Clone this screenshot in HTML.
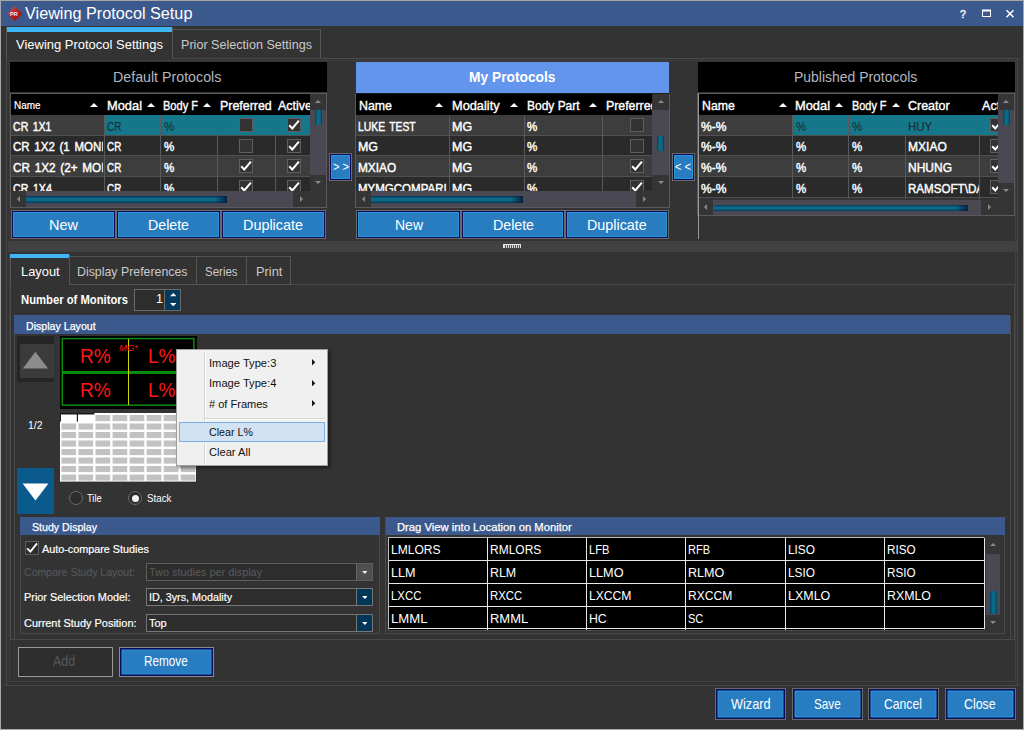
<!DOCTYPE html>
<html><head><meta charset="utf-8"><title>Viewing Protocol Setup</title>
<style>
html,body{margin:0;padding:0;}
body{width:1024px;height:730px;overflow:hidden;position:relative;background:#333;font-family:"Liberation Sans",sans-serif;}
body div,body svg{position:absolute;}
</style></head><body>
<div style="left:0px;top:0px;width:1024px;height:730px;background:#a8a8a8;"></div>
<div style="left:1px;top:1px;width:1022px;height:728px;background:#333333;"></div>
<div style="left:1px;top:1px;width:1022px;height:25px;background:#3c598d;"></div>
<svg style="left:7.2px;top:5.6px" width="15.6" height="15.6" viewBox="0 0 16 16"><defs><linearGradient id="ig" x1="0" y1="0" x2="1" y2="1"><stop offset="0" stop-color="#dc6a62"/><stop offset="0.45" stop-color="#bb1e1c"/><stop offset="1" stop-color="#8c0e0e"/></linearGradient></defs><path d="M8 0.3 L15.7 8 L8 15.7 L0.3 8 Z" fill="url(#ig)"/><text x="7.2" y="9.8" font-family="Liberation Sans, sans-serif" font-size="5.8" font-weight="bold" fill="#f4e6e6" text-anchor="middle">PR</text></svg>
<div style="left:25px;top:5.17px;font-size:17.4px;line-height:1;color:#fff;white-space:pre;transform-origin:0 0;transform:scaleX(0.9327);">Viewing Protocol Setup</div>
<svg style="left:955px;top:4px" width="64" height="20" viewBox="0 0 64 20" fill="none" stroke="#fff"><text x="8" y="13.6" font-family="Liberation Sans, sans-serif" font-size="10.6" fill="#eee" stroke="#eee" stroke-width="0.5" text-anchor="middle">?</text><rect x="27.5" y="6.5" width="8" height="6" stroke-width="1"/><rect x="27" y="5.5" width="9" height="2" fill="#fff" stroke="none"/><path d="M51.5 6.2 L58.5 13.3 M58.5 6.2 L51.5 13.3" stroke-width="1.5"/></svg>
<div style="left:6px;top:58px;width:1012px;height:628px;border:1px solid #4a4a4a;box-sizing:border-box;"></div>
<div style="left:9px;top:60px;width:1007px;height:622px;border:1px solid #3f3f3f;box-sizing:border-box;"></div>
<div style="left:6px;top:27px;width:167px;height:32px;background:#333333;border-left:1px solid #555;border-right:1px solid #555;box-sizing:border-box;"></div>
<div style="left:7px;top:27px;width:165px;height:4.5px;background:#3db5f7;"></div>
<div style="left:172px;top:29px;width:149px;height:29px;background:#333333;border:1px solid #555;box-sizing:border-box;border-bottom:none;"></div>
<div style="left:16px;top:37.99px;font-size:13.6px;line-height:1;color:#fff;white-space:pre;transform-origin:0 0;transform:scaleX(0.9547);">Viewing Protocol Settings</div>
<div style="left:181px;top:37.99px;font-size:13.6px;line-height:1;color:#c9c9c9;white-space:pre;transform-origin:0 0;transform:scaleX(0.9267);">Prior Selection Settings</div>
<div style="left:10px;top:62px;width:317px;height:30px;background:#000;"></div>
<div style="left:113.4px;top:69.81px;font-size:14.4px;line-height:1;color:#b2b7c0;white-space:pre;transform-origin:0 0;transform:scaleX(0.9886);">Default Protocols</div>
<div style="left:10px;top:93px;width:317px;height:115px;background:#2b2b2b;box-sizing:border-box;border:1px solid #5a5a5a;"></div>
<div style="left:11px;top:94px;width:299px;height:21px;background:#000;"></div>
<div style="left:11px;top:115px;width:299px;height:21px;background:#3d3d3d;"></div>
<div style="left:105px;top:115px;width:205px;height:21px;background:#16778b;"></div>
<div style="left:11px;top:135px;width:299px;height:1px;background:#505050;"></div>
<div style="left:11px;top:136px;width:299px;height:20px;background:#2a2a2a;"></div>
<div style="left:11px;top:155px;width:299px;height:1px;background:#505050;"></div>
<div style="left:11px;top:156px;width:299px;height:21px;background:#3d3d3d;"></div>
<div style="left:11px;top:176px;width:299px;height:1px;background:#505050;"></div>
<div style="left:11px;top:177px;width:299px;height:14px;background:#2a2a2a;"></div>
<div style="left:104px;top:115px;width:1px;height:76px;background:#595959;"></div>
<div style="left:160px;top:115px;width:1px;height:76px;background:#595959;"></div>
<div style="left:217px;top:115px;width:1px;height:76px;background:#595959;"></div>
<div style="left:275px;top:115px;width:1px;height:76px;background:#595959;"></div>
<div style="left:13.5px;top:100.05px;font-size:11.4px;line-height:1;color:#fff;white-space:pre;transform-origin:0 0;transform:scaleX(0.8714);-webkit-text-stroke:0.2px #fff;">Name</div>
<svg style="left:90.0px;top:103.0px" width="8" height="4" viewBox="0 0 8 4"><path d="M0 4 L4.0 0 L8 4 Z" fill="#fff"/></svg>
<div style="left:105px;top:95.70px;width:39px;height:21px;overflow:hidden;"><div style="left:107px;top:98.70px;font-size:13px;line-height:1;color:#fff;white-space:pre;transform-origin:0 0;transform:scaleX(0.9885);-webkit-text-stroke:0.38px #fff;left:2px;top:3px;">Modal</div></div>
<svg style="left:147.0px;top:103.0px" width="8" height="4" viewBox="0 0 8 4"><path d="M0 4 L4.0 0 L8 4 Z" fill="#fff"/></svg>
<div style="left:161px;top:95.70px;width:38.5px;height:21px;overflow:hidden;"><div style="left:163px;top:98.70px;font-size:13px;line-height:1;color:#fff;white-space:pre;transform-origin:0 0;transform:scaleX(0.8498);-webkit-text-stroke:0.38px #fff;left:2px;top:3px;">Body F</div></div>
<svg style="left:203.0px;top:103.0px" width="8" height="4" viewBox="0 0 8 4"><path d="M0 4 L4.0 0 L8 4 Z" fill="#fff"/></svg>
<div style="left:220.3px;top:98.70px;font-size:13px;line-height:1;color:#fff;white-space:pre;transform-origin:0 0;transform:scaleX(0.9540);-webkit-text-stroke:0.38px #fff;">Preferred</div>
<div style="left:276px;top:95.70px;width:34px;height:21px;overflow:hidden;"><div style="left:277.6px;top:98.70px;font-size:13px;line-height:1;color:#fff;white-space:pre;transform-origin:0 0;transform:scaleX(0.9576);-webkit-text-stroke:0.38px #fff;left:1.6000000000000227px;top:3px;">Active</div></div>
<div style="left:11px;top:117.59px;width:91.5px;height:20.3px;overflow:hidden;"><div style="left:13px;top:120.59px;font-size:12.3px;line-height:1;color:#fff;white-space:pre;transform-origin:0 0;transform:scaleX(0.8619);-webkit-text-stroke:0.42px #fff;word-spacing:1.6px;left:2px;top:3px;">CR 1X1</div></div>
<div style="left:107px;top:120.59px;font-size:12.3px;line-height:1;color:#14272f;white-space:pre;transform-origin:0 0;transform:scaleX(0.8049);word-spacing:1.6px;">CR</div>
<div style="left:164px;top:120.59px;font-size:12.3px;line-height:1;color:#14272f;white-space:pre;transform-origin:0 0;transform:scaleX(0.9418);word-spacing:1.6px;">%</div>
<div style="left:11px;top:138.29px;width:91.5px;height:20.3px;overflow:hidden;"><div style="left:13px;top:141.29px;font-size:12.3px;line-height:1;color:#fff;white-space:pre;transform-origin:0 0;transform:scaleX(0.9360);-webkit-text-stroke:0.42px #fff;word-spacing:1.6px;left:2px;top:3px;">CR 1X2 (1 MONI</div></div>
<div style="left:107px;top:141.29px;font-size:12.3px;line-height:1;color:#fff;white-space:pre;transform-origin:0 0;transform:scaleX(0.8049);-webkit-text-stroke:0.42px #fff;word-spacing:1.6px;">CR</div>
<div style="left:164px;top:141.29px;font-size:12.3px;line-height:1;color:#fff;white-space:pre;transform-origin:0 0;transform:scaleX(0.9418);-webkit-text-stroke:0.42px #fff;word-spacing:1.6px;">%</div>
<div style="left:11px;top:158.99px;width:91.5px;height:20.3px;overflow:hidden;"><div style="left:13px;top:161.99px;font-size:12.3px;line-height:1;color:#fff;white-space:pre;transform-origin:0 0;transform:scaleX(0.9526);-webkit-text-stroke:0.42px #fff;word-spacing:1.6px;left:2px;top:3px;">CR 1X2 (2+ MOI</div></div>
<div style="left:107px;top:161.99px;font-size:12.3px;line-height:1;color:#fff;white-space:pre;transform-origin:0 0;transform:scaleX(0.8049);-webkit-text-stroke:0.42px #fff;word-spacing:1.6px;">CR</div>
<div style="left:164px;top:161.99px;font-size:12.3px;line-height:1;color:#fff;white-space:pre;transform-origin:0 0;transform:scaleX(0.9418);-webkit-text-stroke:0.42px #fff;word-spacing:1.6px;">%</div>
<div style="left:11px;top:179.69px;width:91.5px;height:20.3px;overflow:hidden;"><div style="left:13px;top:182.69px;font-size:12.3px;line-height:1;color:#fff;white-space:pre;transform-origin:0 0;transform:scaleX(0.8731);-webkit-text-stroke:0.42px #fff;word-spacing:1.6px;left:2px;top:3px;">CR 1X4</div></div>
<div style="left:107px;top:182.69px;font-size:12.3px;line-height:1;color:#fff;white-space:pre;transform-origin:0 0;transform:scaleX(0.8049);-webkit-text-stroke:0.42px #fff;word-spacing:1.6px;">CR</div>
<div style="left:164px;top:182.69px;font-size:12.3px;line-height:1;color:#fff;white-space:pre;transform-origin:0 0;transform:scaleX(0.9418);-webkit-text-stroke:0.42px #fff;word-spacing:1.6px;">%</div>
<div style="left:239px;top:118px;width:14px;height:14px;overflow:hidden;"><div style="left:0;top:0;width:14px;height:14px;box-sizing:border-box;border:1px solid #5e5e5e;background:#333;"></div></div>
<div style="left:287px;top:118px;width:14px;height:14px;overflow:hidden;"><div style="left:0;top:0;width:14px;height:14px;box-sizing:border-box;border:1px solid #5e5e5e;background:#333;"><svg style="left:-1px;top:-1px" width="14" height="14" viewBox="0 0 14 14"><path d="M2.2 7.3 L5.3 10.5 L11.9 2.7" fill="none" stroke="#fff" stroke-width="2"/></svg></div></div>
<div style="left:239px;top:139px;width:14px;height:14px;overflow:hidden;"><div style="left:0;top:0;width:14px;height:14px;box-sizing:border-box;border:1px solid #5e5e5e;background:#333;"></div></div>
<div style="left:287px;top:139px;width:14px;height:14px;overflow:hidden;"><div style="left:0;top:0;width:14px;height:14px;box-sizing:border-box;border:1px solid #5e5e5e;background:#333;"><svg style="left:-1px;top:-1px" width="14" height="14" viewBox="0 0 14 14"><path d="M2.2 7.3 L5.3 10.5 L11.9 2.7" fill="none" stroke="#fff" stroke-width="2"/></svg></div></div>
<div style="left:239px;top:159px;width:14px;height:14px;overflow:hidden;"><div style="left:0;top:0;width:14px;height:14px;box-sizing:border-box;border:1px solid #5e5e5e;background:#333;"><svg style="left:-1px;top:-1px" width="14" height="14" viewBox="0 0 14 14"><path d="M2.2 7.3 L5.3 10.5 L11.9 2.7" fill="none" stroke="#fff" stroke-width="2"/></svg></div></div>
<div style="left:287px;top:159px;width:14px;height:14px;overflow:hidden;"><div style="left:0;top:0;width:14px;height:14px;box-sizing:border-box;border:1px solid #5e5e5e;background:#333;"><svg style="left:-1px;top:-1px" width="14" height="14" viewBox="0 0 14 14"><path d="M2.2 7.3 L5.3 10.5 L11.9 2.7" fill="none" stroke="#fff" stroke-width="2"/></svg></div></div>
<div style="left:239px;top:180px;width:14px;height:11px;overflow:hidden;"><div style="left:0;top:0;width:14px;height:14px;box-sizing:border-box;border:1px solid #5e5e5e;background:#333;"><svg style="left:-1px;top:-1px" width="14" height="14" viewBox="0 0 14 14"><path d="M2.2 7.3 L5.3 10.5 L11.9 2.7" fill="none" stroke="#fff" stroke-width="2"/></svg></div></div>
<div style="left:287px;top:180px;width:14px;height:11px;overflow:hidden;"><div style="left:0;top:0;width:14px;height:14px;box-sizing:border-box;border:1px solid #5e5e5e;background:#333;"><svg style="left:-1px;top:-1px" width="14" height="14" viewBox="0 0 14 14"><path d="M2.2 7.3 L5.3 10.5 L11.9 2.7" fill="none" stroke="#fff" stroke-width="2"/></svg></div></div>
<div style="left:310px;top:94px;width:16px;height:97px;background:#4a4852;"></div>
<div style="left:310px;top:94px;width:16px;height:16px;background:#353535;"></div>
<div style="left:310px;top:175px;width:16px;height:16px;background:#353535;"></div>
<svg style="left:315.0px;top:100.0px" width="6" height="3" viewBox="0 0 6 3"><path d="M0 3 L3 0 L6 3 Z" fill="#8a8a8a"/></svg>
<svg style="left:315.0px;top:180.5px" width="6" height="3" viewBox="0 0 6 3"><path d="M0 0 L3 3 L6 0 Z" fill="#8a8a8a"/></svg>
<div style="left:315px;top:110px;width:7px;height:15px;background:linear-gradient(90deg,#0a3a5c,#0a6a84 30%,#0a6a84 70%,#0a3a5c);"></div>
<div style="left:11px;top:191px;width:315px;height:16px;background:#4a4852;"></div>
<div style="left:11px;top:191px;width:15px;height:16px;background:#353535;"></div>
<div style="left:293px;top:191px;width:33px;height:16px;background:#353535;"></div>
<svg style="left:16.5px;top:196.0px" width="3" height="6" viewBox="0 0 3 6"><path d="M3 0 L0 3 L3 6 Z" fill="#8a8a8a"/></svg>
<svg style="left:299.5px;top:196.0px" width="3" height="6" viewBox="0 0 3 6"><path d="M0 0 L3 3 L0 6 Z" fill="#8a8a8a"/></svg>
<div style="left:26px;top:196px;width:201px;height:6.5px;background:linear-gradient(#0a3358,#0a6a86 35%,#0a6a86 65%,#0a3358);"></div>
<div style="left:215px;top:196px;width:12px;height:6.5px;background:linear-gradient(90deg,rgba(10,40,80,0),rgba(8,30,62,0.95));"></div>
<div style="left:11px;top:210px;width:105px;height:29px;background:#277dc0;box-sizing:border-box;border:1px solid #6a6a6a;box-shadow:inset 0 0 0 1px #0b0b5e,inset 0 0 0 2px #2b93d8;"></div>
<div style="left:49px;top:216.90px;font-size:15px;line-height:1;color:#fff;white-space:pre;transform-origin:0 0;transform:scaleX(0.9664);">New</div>
<div style="left:116px;top:210px;width:105px;height:29px;background:#277dc0;box-sizing:border-box;border:1px solid #6a6a6a;box-shadow:inset 0 0 0 1px #0b0b5e,inset 0 0 0 2px #2b93d8;"></div>
<div style="left:148px;top:216.90px;font-size:15px;line-height:1;color:#fff;white-space:pre;transform-origin:0 0;transform:scaleX(0.9456);">Delete</div>
<div style="left:221px;top:210px;width:104.5px;height:29px;background:#277dc0;box-sizing:border-box;border:1px solid #6a6a6a;box-shadow:inset 0 0 0 1px #0b0b5e,inset 0 0 0 2px #2b93d8;"></div>
<div style="left:243px;top:216.90px;font-size:15px;line-height:1;color:#fff;white-space:pre;transform-origin:0 0;transform:scaleX(0.9595);">Duplicate</div>
<div style="left:329px;top:153.4px;width:23px;height:27.6px;background:#277dc0;box-sizing:border-box;border:1px solid #6a6a6a;box-shadow:inset 0 0 0 1px #0b0b5e,inset 0 0 0 2px #2b93d8;"></div>
<div style="left:332.5px;top:161.42px;font-size:12.5px;line-height:1;color:#fff;white-space:pre;transform-origin:0 0;transform:scaleX(0.8853);">&gt; &gt;</div>
<div style="left:356px;top:62px;width:313px;height:31px;background:#6495ed;"></div>
<div style="left:468.5px;top:69.98px;font-size:14.2px;line-height:1;color:#fff;white-space:pre;transform-origin:0 0;transform:scaleX(0.9702);font-weight:bold;">My Protocols</div>
<div style="left:355px;top:93px;width:315px;height:115px;background:#2b2b2b;box-sizing:border-box;border:1px solid #5a5a5a;border-top-color:#1c1c1c;"></div>
<div style="left:356px;top:94px;width:296px;height:21px;background:#000;"></div>
<div style="left:356px;top:115px;width:296px;height:21px;background:#3d3d3d;"></div>
<div style="left:356px;top:135px;width:296px;height:1px;background:#505050;"></div>
<div style="left:356px;top:136px;width:296px;height:20px;background:#2a2a2a;"></div>
<div style="left:356px;top:155px;width:296px;height:1px;background:#505050;"></div>
<div style="left:356px;top:156px;width:296px;height:21px;background:#3d3d3d;"></div>
<div style="left:356px;top:176px;width:296px;height:1px;background:#505050;"></div>
<div style="left:356px;top:177px;width:296px;height:14px;background:#2a2a2a;"></div>
<div style="left:449px;top:115px;width:1px;height:76px;background:#595959;"></div>
<div style="left:524px;top:115px;width:1px;height:76px;background:#595959;"></div>
<div style="left:602px;top:115px;width:1px;height:76px;background:#595959;"></div>
<div style="left:359px;top:98.70px;font-size:13px;line-height:1;color:#fff;white-space:pre;transform-origin:0 0;transform:scaleX(0.9516);-webkit-text-stroke:0.38px #fff;">Name</div>
<svg style="left:435.0px;top:103.0px" width="8" height="4" viewBox="0 0 8 4"><path d="M0 4 L4.0 0 L8 4 Z" fill="#fff"/></svg>
<div style="left:451.7px;top:98.70px;font-size:13px;line-height:1;color:#fff;white-space:pre;transform-origin:0 0;transform:scaleX(0.9833);-webkit-text-stroke:0.38px #fff;">Modality</div>
<svg style="left:510.0px;top:103.0px" width="8" height="4" viewBox="0 0 8 4"><path d="M0 4 L4.0 0 L8 4 Z" fill="#fff"/></svg>
<div style="left:527px;top:98.70px;font-size:13px;line-height:1;color:#fff;white-space:pre;transform-origin:0 0;transform:scaleX(0.9214);-webkit-text-stroke:0.38px #fff;">Body Part</div>
<svg style="left:588.5px;top:103.0px" width="8" height="4" viewBox="0 0 8 4"><path d="M0 4 L4.0 0 L8 4 Z" fill="#fff"/></svg>
<div style="left:604px;top:95.70px;width:48px;height:21px;overflow:hidden;"><div style="left:605.6px;top:98.70px;font-size:13px;line-height:1;color:#fff;white-space:pre;transform-origin:0 0;transform:scaleX(0.9485);-webkit-text-stroke:0.38px #fff;left:1.6000000000000227px;top:3px;">Preferred</div></div>
<div style="left:356px;top:117.59px;width:92.5px;height:20.3px;overflow:hidden;"><div style="left:358.3px;top:120.59px;font-size:12.3px;line-height:1;color:#fff;white-space:pre;transform-origin:0 0;transform:scaleX(0.8440);-webkit-text-stroke:0.42px #fff;word-spacing:1.6px;left:2.3000000000000114px;top:3px;">LUKE TEST</div></div>
<div style="left:451.7px;top:120.59px;font-size:12.3px;line-height:1;color:#fff;white-space:pre;transform-origin:0 0;transform:scaleX(1.0145);-webkit-text-stroke:0.42px #fff;word-spacing:1.6px;">MG</div>
<div style="left:527px;top:120.59px;font-size:12.3px;line-height:1;color:#fff;white-space:pre;transform-origin:0 0;transform:scaleX(0.9418);-webkit-text-stroke:0.42px #fff;word-spacing:1.6px;">%</div>
<div style="left:356px;top:138.29px;width:92.5px;height:20.3px;overflow:hidden;"><div style="left:358.3px;top:141.29px;font-size:12.3px;line-height:1;color:#fff;white-space:pre;transform-origin:0 0;transform:scaleX(1.0094);-webkit-text-stroke:0.42px #fff;word-spacing:1.6px;left:2.3000000000000114px;top:3px;">MG</div></div>
<div style="left:451.7px;top:141.29px;font-size:12.3px;line-height:1;color:#fff;white-space:pre;transform-origin:0 0;transform:scaleX(1.0145);-webkit-text-stroke:0.42px #fff;word-spacing:1.6px;">MG</div>
<div style="left:527px;top:141.29px;font-size:12.3px;line-height:1;color:#fff;white-space:pre;transform-origin:0 0;transform:scaleX(0.9418);-webkit-text-stroke:0.42px #fff;word-spacing:1.6px;">%</div>
<div style="left:356px;top:158.99px;width:92.5px;height:20.3px;overflow:hidden;"><div style="left:358.3px;top:161.99px;font-size:12.3px;line-height:1;color:#fff;white-space:pre;transform-origin:0 0;transform:scaleX(0.9637);-webkit-text-stroke:0.42px #fff;word-spacing:1.6px;left:2.3000000000000114px;top:3px;">MXIAO</div></div>
<div style="left:451.7px;top:161.99px;font-size:12.3px;line-height:1;color:#fff;white-space:pre;transform-origin:0 0;transform:scaleX(1.0145);-webkit-text-stroke:0.42px #fff;word-spacing:1.6px;">MG</div>
<div style="left:527px;top:161.99px;font-size:12.3px;line-height:1;color:#fff;white-space:pre;transform-origin:0 0;transform:scaleX(0.9418);-webkit-text-stroke:0.42px #fff;word-spacing:1.6px;">%</div>
<div style="left:356px;top:179.69px;width:92.5px;height:20.3px;overflow:hidden;"><div style="left:358.3px;top:182.69px;font-size:12.3px;line-height:1;color:#fff;white-space:pre;transform-origin:0 0;transform:scaleX(0.9361);-webkit-text-stroke:0.42px #fff;word-spacing:1.6px;left:2.3000000000000114px;top:3px;">MYMGCOMPARI</div></div>
<div style="left:451.7px;top:182.69px;font-size:12.3px;line-height:1;color:#fff;white-space:pre;transform-origin:0 0;transform:scaleX(1.0145);-webkit-text-stroke:0.42px #fff;word-spacing:1.6px;">MG</div>
<div style="left:527px;top:182.69px;font-size:12.3px;line-height:1;color:#fff;white-space:pre;transform-origin:0 0;transform:scaleX(0.9418);-webkit-text-stroke:0.42px #fff;word-spacing:1.6px;">%</div>
<div style="left:630px;top:118px;width:14px;height:14px;overflow:hidden;"><div style="left:0;top:0;width:14px;height:14px;box-sizing:border-box;border:1px solid #5e5e5e;background:#333;"></div></div>
<div style="left:630px;top:139px;width:14px;height:14px;overflow:hidden;"><div style="left:0;top:0;width:14px;height:14px;box-sizing:border-box;border:1px solid #5e5e5e;background:#333;"></div></div>
<div style="left:630px;top:159px;width:14px;height:14px;overflow:hidden;"><div style="left:0;top:0;width:14px;height:14px;box-sizing:border-box;border:1px solid #5e5e5e;background:#333;"><svg style="left:-1px;top:-1px" width="14" height="14" viewBox="0 0 14 14"><path d="M2.2 7.3 L5.3 10.5 L11.9 2.7" fill="none" stroke="#fff" stroke-width="2"/></svg></div></div>
<div style="left:630px;top:180px;width:14px;height:11px;overflow:hidden;"><div style="left:0;top:0;width:14px;height:14px;box-sizing:border-box;border:1px solid #5e5e5e;background:#333;"><svg style="left:-1px;top:-1px" width="14" height="14" viewBox="0 0 14 14"><path d="M2.2 7.3 L5.3 10.5 L11.9 2.7" fill="none" stroke="#fff" stroke-width="2"/></svg></div></div>
<div style="left:652px;top:94px;width:17px;height:97px;background:#4a4852;"></div>
<div style="left:652px;top:94px;width:17px;height:16px;background:#353535;"></div>
<div style="left:652px;top:175px;width:17px;height:16px;background:#353535;"></div>
<svg style="left:657.5px;top:100.0px" width="6" height="3" viewBox="0 0 6 3"><path d="M0 3 L3 0 L6 3 Z" fill="#8a8a8a"/></svg>
<svg style="left:657.5px;top:180.5px" width="6" height="3" viewBox="0 0 6 3"><path d="M0 0 L3 3 L6 0 Z" fill="#8a8a8a"/></svg>
<div style="left:657px;top:136px;width:7px;height:15px;background:linear-gradient(90deg,#0a3a5c,#0a6a84 30%,#0a6a84 70%,#0a3a5c);"></div>
<div style="left:356px;top:191px;width:313px;height:16px;background:#4a4852;"></div>
<div style="left:356px;top:191px;width:15px;height:16px;background:#353535;"></div>
<div style="left:636px;top:191px;width:33px;height:16px;background:#353535;"></div>
<svg style="left:361.5px;top:196.0px" width="3" height="6" viewBox="0 0 3 6"><path d="M3 0 L0 3 L3 6 Z" fill="#8a8a8a"/></svg>
<svg style="left:642.5px;top:196.0px" width="3" height="6" viewBox="0 0 3 6"><path d="M0 0 L3 3 L0 6 Z" fill="#8a8a8a"/></svg>
<div style="left:371px;top:196px;width:152px;height:6.5px;background:linear-gradient(#0a3358,#0a6a86 35%,#0a6a86 65%,#0a3358);"></div>
<div style="left:511px;top:196px;width:12px;height:6.5px;background:linear-gradient(90deg,rgba(10,40,80,0),rgba(8,30,62,0.95));"></div>
<div style="left:356px;top:210px;width:105px;height:29px;background:#277dc0;box-sizing:border-box;border:1px solid #6a6a6a;box-shadow:inset 0 0 0 1px #0b0b5e,inset 0 0 0 2px #2b93d8;"></div>
<div style="left:395px;top:216.90px;font-size:15px;line-height:1;color:#fff;white-space:pre;transform-origin:0 0;transform:scaleX(0.9331);">New</div>
<div style="left:461px;top:210px;width:104px;height:29px;background:#277dc0;box-sizing:border-box;border:1px solid #6a6a6a;box-shadow:inset 0 0 0 1px #0b0b5e,inset 0 0 0 2px #2b93d8;"></div>
<div style="left:492.5px;top:216.90px;font-size:15px;line-height:1;color:#fff;white-space:pre;transform-origin:0 0;transform:scaleX(0.9456);">Delete</div>
<div style="left:565px;top:210px;width:103.5px;height:29px;background:#277dc0;box-sizing:border-box;border:1px solid #6a6a6a;box-shadow:inset 0 0 0 1px #0b0b5e,inset 0 0 0 2px #2b93d8;"></div>
<div style="left:586.6px;top:216.90px;font-size:15px;line-height:1;color:#fff;white-space:pre;transform-origin:0 0;transform:scaleX(0.9563);">Duplicate</div>
<div style="left:671.6px;top:153.4px;width:23px;height:27.6px;background:#277dc0;box-sizing:border-box;border:1px solid #6a6a6a;box-shadow:inset 0 0 0 1px #0b0b5e,inset 0 0 0 2px #2b93d8;"></div>
<div style="left:675.3px;top:161.42px;font-size:12.5px;line-height:1;color:#fff;white-space:pre;transform-origin:0 0;transform:scaleX(0.8853);">&lt; &lt;</div>
<div style="left:698px;top:62px;width:317px;height:30px;background:#000;"></div>
<div style="left:794.4px;top:69.81px;font-size:14.4px;line-height:1;color:#b2b7c0;white-space:pre;transform-origin:0 0;transform:scaleX(0.9696);">Published Protocols</div>
<div style="left:697px;top:93px;width:318px;height:123px;background:#333;box-sizing:border-box;border:1px solid #5a5a5a;"></div>
<div style="left:698px;top:94px;width:300px;height:21px;background:#000;"></div>
<div style="left:698px;top:115px;width:300px;height:21px;background:#3d3d3d;"></div>
<div style="left:792.5px;top:115px;width:205.5px;height:21px;background:#16778b;"></div>
<div style="left:698px;top:135px;width:300px;height:1px;background:#505050;"></div>
<div style="left:698px;top:136px;width:300px;height:20px;background:#2a2a2a;"></div>
<div style="left:698px;top:155px;width:300px;height:1px;background:#505050;"></div>
<div style="left:698px;top:156px;width:300px;height:21px;background:#3d3d3d;"></div>
<div style="left:698px;top:176px;width:300px;height:1px;background:#505050;"></div>
<div style="left:698px;top:177px;width:300px;height:21px;background:#2a2a2a;"></div>
<div style="left:698px;top:197px;width:300px;height:1px;background:#505050;"></div>
<div style="left:791.5px;top:115px;width:1px;height:84px;background:#595959;"></div>
<div style="left:848px;top:115px;width:1px;height:84px;background:#595959;"></div>
<div style="left:904.5px;top:115px;width:1px;height:84px;background:#595959;"></div>
<div style="left:979px;top:115px;width:1px;height:84px;background:#595959;"></div>
<div style="left:701.6px;top:98.70px;font-size:13px;line-height:1;color:#fff;white-space:pre;transform-origin:0 0;transform:scaleX(0.9459);-webkit-text-stroke:0.38px #fff;">Name</div>
<svg style="left:778.5px;top:103.0px" width="8" height="4" viewBox="0 0 8 4"><path d="M0 4 L4.0 0 L8 4 Z" fill="#fff"/></svg>
<div style="left:793.5px;top:95.70px;width:38.5px;height:21px;overflow:hidden;"><div style="left:795px;top:98.70px;font-size:13px;line-height:1;color:#fff;white-space:pre;transform-origin:0 0;transform:scaleX(0.9885);-webkit-text-stroke:0.38px #fff;left:1.5px;top:3px;">Modal</div></div>
<svg style="left:835.0px;top:103.0px" width="8" height="4" viewBox="0 0 8 4"><path d="M0 4 L4.0 0 L8 4 Z" fill="#fff"/></svg>
<div style="left:850px;top:95.70px;width:38px;height:21px;overflow:hidden;"><div style="left:852px;top:98.70px;font-size:13px;line-height:1;color:#fff;white-space:pre;transform-origin:0 0;transform:scaleX(0.8377);-webkit-text-stroke:0.38px #fff;left:2px;top:3px;">Body F</div></div>
<svg style="left:891.5px;top:103.0px" width="8" height="4" viewBox="0 0 8 4"><path d="M0 4 L4.0 0 L8 4 Z" fill="#fff"/></svg>
<div style="left:908px;top:98.70px;font-size:13px;line-height:1;color:#fff;white-space:pre;transform-origin:0 0;transform:scaleX(0.9597);-webkit-text-stroke:0.38px #fff;">Creator</div>
<div style="left:981px;top:95.70px;width:17px;height:21px;overflow:hidden;"><div style="left:982px;top:98.70px;font-size:13px;line-height:1;color:#fff;white-space:pre;transform-origin:0 0;transform:scaleX(0.9690);-webkit-text-stroke:0.38px #fff;left:1px;top:3px;">Acti</div></div>
<div style="left:701px;top:120.59px;font-size:12.3px;line-height:1;color:#fff;white-space:pre;transform-origin:0 0;transform:scaleX(0.9819);-webkit-text-stroke:0.42px #fff;word-spacing:1.6px;">%-%</div>
<div style="left:795.6px;top:120.59px;font-size:12.3px;line-height:1;color:#14272f;white-space:pre;transform-origin:0 0;transform:scaleX(0.9326);word-spacing:1.6px;">%</div>
<div style="left:852px;top:120.59px;font-size:12.3px;line-height:1;color:#14272f;white-space:pre;transform-origin:0 0;transform:scaleX(0.9326);word-spacing:1.6px;">%</div>
<div style="left:906.5px;top:117.59px;width:72.0px;height:20.3px;overflow:hidden;"><div style="left:908px;top:120.59px;font-size:12.3px;line-height:1;color:#14272f;white-space:pre;transform-origin:0 0;transform:scaleX(0.9242);word-spacing:1.6px;left:1.5px;top:3px;">HUY</div></div>
<div style="left:990px;top:118px;width:8px;height:14px;overflow:hidden;"><div style="left:0;top:0;width:14px;height:14px;box-sizing:border-box;border:1px solid #5e5e5e;background:#333;"><svg style="left:-1px;top:-1px" width="14" height="14" viewBox="0 0 14 14"><path d="M2.2 7.3 L5.3 10.5 L11.9 2.7" fill="none" stroke="#fff" stroke-width="2"/></svg></div></div>
<div style="left:701px;top:141.29px;font-size:12.3px;line-height:1;color:#fff;white-space:pre;transform-origin:0 0;transform:scaleX(0.9819);-webkit-text-stroke:0.42px #fff;word-spacing:1.6px;">%-%</div>
<div style="left:795.6px;top:141.29px;font-size:12.3px;line-height:1;color:#fff;white-space:pre;transform-origin:0 0;transform:scaleX(0.9326);-webkit-text-stroke:0.42px #fff;word-spacing:1.6px;">%</div>
<div style="left:852px;top:141.29px;font-size:12.3px;line-height:1;color:#fff;white-space:pre;transform-origin:0 0;transform:scaleX(0.9326);-webkit-text-stroke:0.42px #fff;word-spacing:1.6px;">%</div>
<div style="left:906.5px;top:138.29px;width:72.0px;height:20.3px;overflow:hidden;"><div style="left:908px;top:141.29px;font-size:12.3px;line-height:1;color:#fff;white-space:pre;transform-origin:0 0;transform:scaleX(0.9788);-webkit-text-stroke:0.42px #fff;word-spacing:1.6px;left:1.5px;top:3px;">MXIAO</div></div>
<div style="left:990px;top:139px;width:8px;height:14px;overflow:hidden;"><div style="left:0;top:0;width:14px;height:14px;box-sizing:border-box;border:1px solid #5e5e5e;background:#333;"><svg style="left:-1px;top:-1px" width="14" height="14" viewBox="0 0 14 14"><path d="M2.2 7.3 L5.3 10.5 L11.9 2.7" fill="none" stroke="#fff" stroke-width="2"/></svg></div></div>
<div style="left:701px;top:161.99px;font-size:12.3px;line-height:1;color:#fff;white-space:pre;transform-origin:0 0;transform:scaleX(0.9819);-webkit-text-stroke:0.42px #fff;word-spacing:1.6px;">%-%</div>
<div style="left:795.6px;top:161.99px;font-size:12.3px;line-height:1;color:#fff;white-space:pre;transform-origin:0 0;transform:scaleX(0.9326);-webkit-text-stroke:0.42px #fff;word-spacing:1.6px;">%</div>
<div style="left:852px;top:161.99px;font-size:12.3px;line-height:1;color:#fff;white-space:pre;transform-origin:0 0;transform:scaleX(0.9326);-webkit-text-stroke:0.42px #fff;word-spacing:1.6px;">%</div>
<div style="left:906.5px;top:158.99px;width:72.0px;height:20.3px;overflow:hidden;"><div style="left:908px;top:161.99px;font-size:12.3px;line-height:1;color:#fff;white-space:pre;transform-origin:0 0;transform:scaleX(0.9756);-webkit-text-stroke:0.42px #fff;word-spacing:1.6px;left:1.5px;top:3px;">NHUNG</div></div>
<div style="left:990px;top:159px;width:8px;height:14px;overflow:hidden;"><div style="left:0;top:0;width:14px;height:14px;box-sizing:border-box;border:1px solid #5e5e5e;background:#333;"><svg style="left:-1px;top:-1px" width="14" height="14" viewBox="0 0 14 14"><path d="M2.2 7.3 L5.3 10.5 L11.9 2.7" fill="none" stroke="#fff" stroke-width="2"/></svg></div></div>
<div style="left:701px;top:182.69px;font-size:12.3px;line-height:1;color:#fff;white-space:pre;transform-origin:0 0;transform:scaleX(0.9819);-webkit-text-stroke:0.42px #fff;word-spacing:1.6px;">%-%</div>
<div style="left:795.6px;top:182.69px;font-size:12.3px;line-height:1;color:#fff;white-space:pre;transform-origin:0 0;transform:scaleX(0.9326);-webkit-text-stroke:0.42px #fff;word-spacing:1.6px;">%</div>
<div style="left:852px;top:182.69px;font-size:12.3px;line-height:1;color:#fff;white-space:pre;transform-origin:0 0;transform:scaleX(0.9326);-webkit-text-stroke:0.42px #fff;word-spacing:1.6px;">%</div>
<div style="left:906.5px;top:179.69px;width:72.0px;height:20.3px;overflow:hidden;"><div style="left:908px;top:182.69px;font-size:12.3px;line-height:1;color:#fff;white-space:pre;transform-origin:0 0;transform:scaleX(0.9425);-webkit-text-stroke:0.42px #fff;word-spacing:1.6px;left:1.5px;top:3px;">RAMSOFT\DA</div></div>
<div style="left:990px;top:180px;width:8px;height:14px;overflow:hidden;"><div style="left:0;top:0;width:14px;height:14px;box-sizing:border-box;border:1px solid #5e5e5e;background:#333;"><svg style="left:-1px;top:-1px" width="14" height="14" viewBox="0 0 14 14"><path d="M2.2 7.3 L5.3 10.5 L11.9 2.7" fill="none" stroke="#fff" stroke-width="2"/></svg></div></div>
<div style="left:998px;top:94px;width:16px;height:105px;background:#4a4852;"></div>
<div style="left:998px;top:94px;width:16px;height:16px;background:#353535;"></div>
<div style="left:998px;top:183px;width:16px;height:16px;background:#353535;"></div>
<svg style="left:1003.0px;top:100.0px" width="6" height="3" viewBox="0 0 6 3"><path d="M0 3 L3 0 L6 3 Z" fill="#8a8a8a"/></svg>
<svg style="left:1003.0px;top:188.5px" width="6" height="3" viewBox="0 0 6 3"><path d="M0 0 L3 3 L6 0 Z" fill="#8a8a8a"/></svg>
<div style="left:1003px;top:110px;width:7px;height:15px;background:linear-gradient(90deg,#0a3a5c,#0a6a84 30%,#0a6a84 70%,#0a3a5c);"></div>
<div style="left:698px;top:199.6px;width:316px;height:15.6px;background:#4a4852;"></div>
<div style="left:698px;top:199.6px;width:15px;height:15.6px;background:#353535;"></div>
<div style="left:981px;top:199.6px;width:33px;height:15.6px;background:#353535;"></div>
<svg style="left:703.5px;top:204.4px" width="3" height="6" viewBox="0 0 3 6"><path d="M3 0 L0 3 L3 6 Z" fill="#8a8a8a"/></svg>
<svg style="left:987.5px;top:204.4px" width="3" height="6" viewBox="0 0 3 6"><path d="M0 0 L3 3 L0 6 Z" fill="#8a8a8a"/></svg>
<div style="left:714px;top:204.6px;width:254px;height:6.1px;background:linear-gradient(#0a3358,#0a6a86 35%,#0a6a86 65%,#0a3358);"></div>
<div style="left:956px;top:204.6px;width:12px;height:6.1px;background:linear-gradient(90deg,rgba(10,40,80,0),rgba(8,30,62,0.95));"></div>
<div style="left:698px;top:93px;width:1px;height:146px;background:#9a9a9a;"></div>
<div style="left:8px;top:241px;width:1009px;height:11px;background:#414141;"></div>
<div style="left:503px;top:244.4px;width:18px;height:4px;background:repeating-linear-gradient(90deg,#d8d8d8 0 1px,#555 1px 2px);border-top:1.5px solid #e6e6e6;border-left:1px solid #e6e6e6;box-sizing:border-box;"></div>
<div style="left:10px;top:284px;width:1005px;height:356px;border:1px solid #4a4a4a;box-sizing:border-box;"></div>
<div style="left:14px;top:316px;width:997px;height:324px;border:1px solid #4a4a4a;border-top:none;box-sizing:border-box;"></div>
<div style="left:10px;top:254px;width:60px;height:31px;background:#333333;border-left:1px solid #555;border-right:1px solid #555;box-sizing:border-box;"></div>
<div style="left:10px;top:254px;width:59px;height:4.3px;background:#3db5f7;"></div>
<div style="left:69px;top:256px;width:128px;height:29px;background:#333333;border:1px solid #555;box-sizing:border-box;"></div>
<div style="left:196px;top:256px;width:51px;height:29px;background:#333333;border:1px solid #555;box-sizing:border-box;"></div>
<div style="left:246px;top:256px;width:45px;height:29px;background:#333333;border:1px solid #555;box-sizing:border-box;"></div>
<div style="left:20.6px;top:264.69px;font-size:13.6px;line-height:1;color:#fff;white-space:pre;transform-origin:0 0;transform:scaleX(0.9478);">Layout</div>
<div style="left:77px;top:264.69px;font-size:13.6px;line-height:1;color:#c9c9c9;white-space:pre;transform-origin:0 0;transform:scaleX(0.9088);">Display Preferences</div>
<div style="left:205px;top:264.69px;font-size:13.6px;line-height:1;color:#c9c9c9;white-space:pre;transform-origin:0 0;transform:scaleX(0.8457);">Series</div>
<div style="left:255.6px;top:264.69px;font-size:13.6px;line-height:1;color:#c9c9c9;white-space:pre;transform-origin:0 0;transform:scaleX(0.9441);">Print</div>
<div style="left:21.2px;top:293.83px;font-size:12.6px;line-height:1;color:#fff;white-space:pre;transform-origin:0 0;transform:scaleX(0.8939);font-weight:bold;">Number of Monitors</div>
<div style="left:134px;top:289px;width:47px;height:22px;background:#2d2d2d;border:1px solid #6a6a6a;box-sizing:border-box;"></div>
<div style="left:165px;top:290px;width:15px;height:20px;background:#033a5e;"></div>
<div style="left:156.4px;top:293.23px;font-size:12.6px;line-height:1;color:#fff;white-space:pre;transform-origin:0 0;transform:scaleX(0.9989);">1</div>
<svg style="left:169.7px;top:293.25px" width="6.6" height="3.3" viewBox="0 0 6.6 3.3"><path d="M0 3.3 L3.3 0 L6.6 3.3 Z" fill="#fff"/></svg>
<svg style="left:169.7px;top:303.15000000000003px" width="6.6" height="3.3" viewBox="0 0 6.6 3.3"><path d="M0 0 L3.3 3.3 L6.6 0 Z" fill="#fff"/></svg>
<div style="left:164px;top:290px;width:1px;height:20px;background:#6a6a6a;"></div>
<div style="left:14px;top:315px;width:996px;height:19px;background:#3c598d;"></div>
<div style="left:25.6px;top:320.65px;font-size:11.4px;line-height:1;color:#fff;white-space:pre;transform-origin:0 0;transform:scaleX(0.9321);-webkit-text-stroke:0.25px #fff;">Display Layout</div>
<div style="left:17px;top:336px;width:37px;height:46px;background:#252525;"></div>
<div style="left:20px;top:344px;width:34px;height:34px;background:#3b3b3b;"></div>
<svg style="left:22px;top:351px" width="27" height="18" viewBox="0 0 27 18"><path d="M0.8 17.6 L13.4 0.8 L26 17.6 Z" fill="#8c8c8c"/></svg>
<div style="left:59.5px;top:336px;width:137.5px;height:72.5px;background:#000;"></div>
<svg style="left:60px;top:336px" width="137" height="72" viewBox="0 0 137 72"><rect x="2.3" y="2.6" width="131.6" height="66.6" fill="none" stroke="#0b8c0b" stroke-width="1.5"/></svg>
<div style="left:62px;top:371px;width:132px;height:3px;background:#0b8c0b;"></div>
<div style="left:128px;top:339px;width:1.2px;height:66px;background:#d4d400;"></div>
<div style="left:80.3px;top:346.12px;font-size:20.3px;line-height:1;color:#ff1616;white-space:pre;transform-origin:0 0;transform:scaleX(0.9447);">R%</div>
<div style="left:80.3px;top:379.92px;font-size:20.3px;line-height:1;color:#ff1616;white-space:pre;transform-origin:0 0;transform:scaleX(0.9447);">R%</div>
<div style="left:148px;top:346.12px;font-size:20.3px;line-height:1;color:#ff1616;white-space:pre;transform-origin:0 0;transform:scaleX(0.9373);">L%</div>
<div style="left:148px;top:379.92px;font-size:20.3px;line-height:1;color:#ff1616;white-space:pre;transform-origin:0 0;transform:scaleX(0.9373);">L%</div>
<div style="left:118.6px;top:343.78px;font-size:9px;line-height:1;color:#ff1616;white-space:pre;transform-origin:0 0;transform:scaleX(1.0556);font-style:italic;">MG*</div>
<div style="left:28px;top:419.95px;font-size:11.4px;line-height:1;color:#fff;white-space:pre;transform-origin:0 0;transform:scaleX(0.9150);">1/2</div>
<svg style="left:60px;top:413px" width="136.4" height="68.6" viewBox="0 0 136.4 68.6"><rect width="136.4" height="68.6" fill="#fff"/><rect x="35.50" y="2.00" width="14.7" height="6.1" fill="#c2c2c2"/><rect x="52.55" y="2.00" width="14.7" height="6.1" fill="#c2c2c2"/><rect x="69.60" y="2.00" width="14.7" height="6.1" fill="#c2c2c2"/><rect x="86.65" y="2.00" width="14.7" height="6.1" fill="#c2c2c2"/><rect x="103.70" y="2.00" width="14.7" height="6.1" fill="#c2c2c2"/><rect x="120.75" y="2.00" width="14.7" height="6.1" fill="#c2c2c2"/><rect x="1.40" y="10.50" width="14.7" height="6.1" fill="#c2c2c2"/><rect x="18.45" y="10.50" width="14.7" height="6.1" fill="#c2c2c2"/><rect x="35.50" y="10.50" width="14.7" height="6.1" fill="#c2c2c2"/><rect x="52.55" y="10.50" width="14.7" height="6.1" fill="#c2c2c2"/><rect x="69.60" y="10.50" width="14.7" height="6.1" fill="#c2c2c2"/><rect x="86.65" y="10.50" width="14.7" height="6.1" fill="#c2c2c2"/><rect x="103.70" y="10.50" width="14.7" height="6.1" fill="#c2c2c2"/><rect x="120.75" y="10.50" width="14.7" height="6.1" fill="#c2c2c2"/><rect x="1.40" y="19.00" width="14.7" height="6.1" fill="#c2c2c2"/><rect x="18.45" y="19.00" width="14.7" height="6.1" fill="#c2c2c2"/><rect x="35.50" y="19.00" width="14.7" height="6.1" fill="#c2c2c2"/><rect x="52.55" y="19.00" width="14.7" height="6.1" fill="#c2c2c2"/><rect x="69.60" y="19.00" width="14.7" height="6.1" fill="#c2c2c2"/><rect x="86.65" y="19.00" width="14.7" height="6.1" fill="#c2c2c2"/><rect x="103.70" y="19.00" width="14.7" height="6.1" fill="#c2c2c2"/><rect x="120.75" y="19.00" width="14.7" height="6.1" fill="#c2c2c2"/><rect x="1.40" y="27.50" width="14.7" height="6.1" fill="#c2c2c2"/><rect x="18.45" y="27.50" width="14.7" height="6.1" fill="#c2c2c2"/><rect x="35.50" y="27.50" width="14.7" height="6.1" fill="#c2c2c2"/><rect x="52.55" y="27.50" width="14.7" height="6.1" fill="#c2c2c2"/><rect x="69.60" y="27.50" width="14.7" height="6.1" fill="#c2c2c2"/><rect x="86.65" y="27.50" width="14.7" height="6.1" fill="#c2c2c2"/><rect x="103.70" y="27.50" width="14.7" height="6.1" fill="#c2c2c2"/><rect x="120.75" y="27.50" width="14.7" height="6.1" fill="#c2c2c2"/><rect x="1.40" y="36.00" width="14.7" height="6.1" fill="#c2c2c2"/><rect x="18.45" y="36.00" width="14.7" height="6.1" fill="#c2c2c2"/><rect x="35.50" y="36.00" width="14.7" height="6.1" fill="#c2c2c2"/><rect x="52.55" y="36.00" width="14.7" height="6.1" fill="#c2c2c2"/><rect x="69.60" y="36.00" width="14.7" height="6.1" fill="#c2c2c2"/><rect x="86.65" y="36.00" width="14.7" height="6.1" fill="#c2c2c2"/><rect x="103.70" y="36.00" width="14.7" height="6.1" fill="#c2c2c2"/><rect x="120.75" y="36.00" width="14.7" height="6.1" fill="#c2c2c2"/><rect x="1.40" y="44.50" width="14.7" height="6.1" fill="#c2c2c2"/><rect x="18.45" y="44.50" width="14.7" height="6.1" fill="#c2c2c2"/><rect x="35.50" y="44.50" width="14.7" height="6.1" fill="#c2c2c2"/><rect x="52.55" y="44.50" width="14.7" height="6.1" fill="#c2c2c2"/><rect x="69.60" y="44.50" width="14.7" height="6.1" fill="#c2c2c2"/><rect x="86.65" y="44.50" width="14.7" height="6.1" fill="#c2c2c2"/><rect x="103.70" y="44.50" width="14.7" height="6.1" fill="#c2c2c2"/><rect x="120.75" y="44.50" width="14.7" height="6.1" fill="#c2c2c2"/><rect x="1.40" y="53.00" width="14.7" height="6.1" fill="#c2c2c2"/><rect x="18.45" y="53.00" width="14.7" height="6.1" fill="#c2c2c2"/><rect x="35.50" y="53.00" width="14.7" height="6.1" fill="#c2c2c2"/><rect x="52.55" y="53.00" width="14.7" height="6.1" fill="#c2c2c2"/><rect x="69.60" y="53.00" width="14.7" height="6.1" fill="#c2c2c2"/><rect x="86.65" y="53.00" width="14.7" height="6.1" fill="#c2c2c2"/><rect x="103.70" y="53.00" width="14.7" height="6.1" fill="#c2c2c2"/><rect x="120.75" y="53.00" width="14.7" height="6.1" fill="#c2c2c2"/><rect x="1.40" y="61.50" width="14.7" height="6.1" fill="#c2c2c2"/><rect x="18.45" y="61.50" width="14.7" height="6.1" fill="#c2c2c2"/><rect x="35.50" y="61.50" width="14.7" height="6.1" fill="#c2c2c2"/><rect x="52.55" y="61.50" width="14.7" height="6.1" fill="#c2c2c2"/><rect x="69.60" y="61.50" width="14.7" height="6.1" fill="#c2c2c2"/><rect x="86.65" y="61.50" width="14.7" height="6.1" fill="#c2c2c2"/><rect x="103.70" y="61.50" width="14.7" height="6.1" fill="#c2c2c2"/><rect x="120.75" y="61.50" width="14.7" height="6.1" fill="#c2c2c2"/><rect x="0" y="0" width="34.4" height="1.5" fill="#1a1a1a"/><rect x="0" y="0" width="1" height="8.5" fill="#1a1a1a"/><rect x="16.8" y="0" width="1.2" height="8.5" fill="#1a1a1a"/></svg>
<div style="left:17px;top:467.5px;width:37px;height:46px;background:#0a5a8e;"></div>
<svg style="left:22px;top:483px" width="27" height="18" viewBox="0 0 27 18"><path d="M0.6 0.6 L13.5 17.4 L26.4 0.6 Z" fill="#fff"/></svg>
<div style="left:69px;top:491.4px;width:14px;height:14px;border-radius:50%;box-sizing:border-box;border:1px solid #6a6a6a;background:#2d2d2d;"></div>
<div style="left:128.2px;top:491.4px;width:14px;height:14px;border-radius:50%;box-sizing:border-box;border:1px solid #6a6a6a;background:#2d2d2d;"></div>
<div style="left:131.7px;top:494.9px;width:7px;height:7px;border-radius:50%;background:#f4f4f4;"></div>
<div style="left:87.3px;top:492.65px;font-size:11.4px;line-height:1;color:#fff;white-space:pre;transform-origin:0 0;transform:scaleX(0.8191);">Tile</div>
<div style="left:147px;top:492.65px;font-size:11.4px;line-height:1;color:#fff;white-space:pre;transform-origin:0 0;transform:scaleX(0.8593);">Stack</div>
<div style="left:20px;top:516.5px;width:359.5px;height:117.5px;border:1px solid #4a4a4a;box-sizing:border-box;"></div>
<div style="left:20px;top:516.5px;width:359.5px;height:18.3px;background:#3c598d;"></div>
<div style="left:31.5px;top:521.55px;font-size:11.4px;line-height:1;color:#fff;white-space:pre;transform-origin:0 0;transform:scaleX(0.9326);-webkit-text-stroke:0.25px #fff;">Study Display</div>
<div style="left:24.5px;top:541px;width:14px;height:14px;box-sizing:border-box;border:1px solid #5e5e5e;background:#2d2d2d;"><svg style="left:-1px;top:-1px" width="14" height="14" viewBox="0 0 14 14"><path d="M2.2 7.4 L5.4 10.6 L12 2.4" fill="none" stroke="#fff" stroke-width="1.8"/></svg></div>
<div style="left:42px;top:544.15px;font-size:11.4px;line-height:1;color:#fff;white-space:pre;transform-origin:0 0;transform:scaleX(0.9486);-webkit-text-stroke:0.2px #fff;">Auto-compare Studies</div>
<div style="left:24.4px;top:566.65px;font-size:11.4px;line-height:1;color:#5a5a5a;white-space:pre;transform-origin:0 0;transform:scaleX(0.9276);">Compare Study Layout:</div>
<div style="left:146px;top:563px;width:227px;height:18px;background:#2d2d2d;border:1px solid #5e5e5e;box-sizing:border-box;"></div>
<div style="left:356px;top:564px;width:1px;height:16px;background:#666;"></div>
<div style="left:357px;top:564px;width:15px;height:16px;background:#4f4f4f;"></div>
<svg style="left:361.70000000000005px;top:570.75px" width="5.8" height="2.9" viewBox="0 0 5.8 2.9"><path d="M0 0 L2.9 2.9 L5.8 0 Z" fill="#ececec"/></svg>
<div style="left:149.3px;top:566.65px;font-size:11.4px;line-height:1;color:#5a5a5a;white-space:pre;transform-origin:0 0;transform:scaleX(0.9553);">Two studies per display</div>
<div style="left:24.4px;top:591.85px;font-size:11.4px;line-height:1;color:#fff;white-space:pre;transform-origin:0 0;transform:scaleX(0.9559);-webkit-text-stroke:0.2px #fff;">Prior Selection Model:</div>
<div style="left:146px;top:588px;width:227px;height:18px;background:#2d2d2d;border:1px solid #767676;box-sizing:border-box;"></div>
<div style="left:356px;top:589px;width:1px;height:16px;background:#767676;"></div>
<div style="left:357px;top:589px;width:15px;height:16px;background:#03375a;"></div>
<svg style="left:361.70000000000005px;top:595.75px" width="5.8" height="2.9" viewBox="0 0 5.8 2.9"><path d="M0 0 L2.9 2.9 L5.8 0 Z" fill="#fff"/></svg>
<div style="left:149.3px;top:591.85px;font-size:11.4px;line-height:1;color:#fff;white-space:pre;transform-origin:0 0;transform:scaleX(0.9449);-webkit-text-stroke:0.2px #fff;">ID, 3yrs, Modality</div>
<div style="left:24.4px;top:617.95px;font-size:11.4px;line-height:1;color:#fff;white-space:pre;transform-origin:0 0;transform:scaleX(0.9606);-webkit-text-stroke:0.2px #fff;">Current Study Position:</div>
<div style="left:146px;top:614px;width:227px;height:18px;background:#2d2d2d;border:1px solid #767676;box-sizing:border-box;"></div>
<div style="left:356px;top:615px;width:1px;height:16px;background:#767676;"></div>
<div style="left:357px;top:615px;width:15px;height:16px;background:#03375a;"></div>
<svg style="left:361.70000000000005px;top:621.75px" width="5.8" height="2.9" viewBox="0 0 5.8 2.9"><path d="M0 0 L2.9 2.9 L5.8 0 Z" fill="#fff"/></svg>
<div style="left:149.3px;top:617.95px;font-size:11.4px;line-height:1;color:#fff;white-space:pre;transform-origin:0 0;transform:scaleX(0.9630);-webkit-text-stroke:0.2px #fff;">Top</div>
<div style="left:385px;top:516.5px;width:620px;height:117.5px;border:1px solid #4a4a4a;box-sizing:border-box;"></div>
<div style="left:385.5px;top:516.5px;width:619px;height:18.3px;background:#3c598d;"></div>
<div style="left:397px;top:521.55px;font-size:11.4px;line-height:1;color:#fff;white-space:pre;transform-origin:0 0;transform:scaleX(0.9874);-webkit-text-stroke:0.25px #fff;">Drag View into Location on Monitor</div>
<div style="left:388px;top:537px;width:596px;height:93px;background:#000;"></div>
<div style="left:388px;top:537px;width:596.5px;height:93.5px;box-sizing:border-box;border:1px solid #4a4a4a;"></div>
<div style="left:487px;top:537.5px;width:1px;height:92px;background:#e8e8e8;"></div>
<div style="left:586px;top:537.5px;width:1px;height:92px;background:#e8e8e8;"></div>
<div style="left:685px;top:537.5px;width:1px;height:92px;background:#e8e8e8;"></div>
<div style="left:785px;top:537.5px;width:1px;height:92px;background:#e8e8e8;"></div>
<div style="left:884px;top:537.5px;width:1px;height:92px;background:#e8e8e8;"></div>
<div style="left:388.5px;top:560px;width:595.5px;height:1px;background:#e8e8e8;"></div>
<div style="left:388.5px;top:583px;width:595.5px;height:1px;background:#e8e8e8;"></div>
<div style="left:388.5px;top:606px;width:595.5px;height:1px;background:#e8e8e8;"></div>
<div style="left:388.5px;top:628px;width:595.5px;height:1px;background:#e8e8e8;"></div>
<div style="left:388.5px;top:537.4px;width:595.5px;height:1px;background:#bdbdbd;"></div>
<div style="left:388px;top:537.4px;width:1px;height:92px;background:#bdbdbd;"></div>
<div style="left:984px;top:537.5px;width:1px;height:91.5px;background:#e8e8e8;"></div>
<div style="left:390.9px;top:542.89px;font-size:13.6px;line-height:1;color:#fff;white-space:pre;transform-origin:0 0;transform:scaleX(0.8874);">LMLORS</div>
<div style="left:489.9px;top:542.89px;font-size:13.6px;line-height:1;color:#fff;white-space:pre;transform-origin:0 0;transform:scaleX(0.8820);">RMLORS</div>
<div style="left:588.9px;top:542.89px;font-size:13.6px;line-height:1;color:#fff;white-space:pre;transform-origin:0 0;transform:scaleX(0.8187);">LFB</div>
<div style="left:687.9px;top:542.89px;font-size:13.6px;line-height:1;color:#fff;white-space:pre;transform-origin:0 0;transform:scaleX(0.8130);">RFB</div>
<div style="left:787.9px;top:542.89px;font-size:13.6px;line-height:1;color:#fff;white-space:pre;transform-origin:0 0;transform:scaleX(0.8697);">LISO</div>
<div style="left:886.9px;top:542.89px;font-size:13.6px;line-height:1;color:#fff;white-space:pre;transform-origin:0 0;transform:scaleX(0.8615);">RISO</div>
<div style="left:390.9px;top:565.89px;font-size:13.6px;line-height:1;color:#fff;white-space:pre;transform-origin:0 0;transform:scaleX(0.9271);">LLM</div>
<div style="left:489.9px;top:565.89px;font-size:13.6px;line-height:1;color:#fff;white-space:pre;transform-origin:0 0;transform:scaleX(0.9131);">RLM</div>
<div style="left:588.9px;top:565.89px;font-size:13.6px;line-height:1;color:#fff;white-space:pre;transform-origin:0 0;transform:scaleX(0.9337);">LLMO</div>
<div style="left:687.9px;top:565.89px;font-size:13.6px;line-height:1;color:#fff;white-space:pre;transform-origin:0 0;transform:scaleX(0.9231);">RLMO</div>
<div style="left:787.9px;top:565.89px;font-size:13.6px;line-height:1;color:#fff;white-space:pre;transform-origin:0 0;transform:scaleX(0.8697);">LSIO</div>
<div style="left:886.9px;top:565.89px;font-size:13.6px;line-height:1;color:#fff;white-space:pre;transform-origin:0 0;transform:scaleX(0.8615);">RSIO</div>
<div style="left:390.9px;top:588.89px;font-size:13.6px;line-height:1;color:#fff;white-space:pre;transform-origin:0 0;transform:scaleX(0.8414);">LXCC</div>
<div style="left:489.9px;top:588.89px;font-size:13.6px;line-height:1;color:#fff;white-space:pre;transform-origin:0 0;transform:scaleX(0.8361);">RXCC</div>
<div style="left:588.9px;top:588.89px;font-size:13.6px;line-height:1;color:#fff;white-space:pre;transform-origin:0 0;transform:scaleX(0.8926);">LXCCM</div>
<div style="left:687.9px;top:588.89px;font-size:13.6px;line-height:1;color:#fff;white-space:pre;transform-origin:0 0;transform:scaleX(0.8862);">RXCCM</div>
<div style="left:787.9px;top:588.89px;font-size:13.6px;line-height:1;color:#fff;white-space:pre;transform-origin:0 0;transform:scaleX(0.9179);">LXMLO</div>
<div style="left:886.9px;top:588.89px;font-size:13.6px;line-height:1;color:#fff;white-space:pre;transform-origin:0 0;transform:scaleX(0.9101);">RXMLO</div>
<div style="left:390.9px;top:611.89px;font-size:13.6px;line-height:1;color:#fff;white-space:pre;transform-origin:0 0;transform:scaleX(0.9659);">LMML</div>
<div style="left:489.9px;top:611.89px;font-size:13.6px;line-height:1;color:#fff;white-space:pre;transform-origin:0 0;transform:scaleX(0.9537);">RMML</div>
<div style="left:588.9px;top:611.89px;font-size:13.6px;line-height:1;color:#fff;white-space:pre;transform-origin:0 0;transform:scaleX(0.9019);">HC</div>
<div style="left:687.9px;top:611.89px;font-size:13.6px;line-height:1;color:#fff;white-space:pre;transform-origin:0 0;transform:scaleX(0.8114);">SC</div>
<div style="left:985.5px;top:537px;width:14.5px;height:93px;background:#4a4852;"></div>
<div style="left:985.5px;top:537px;width:14.5px;height:17px;background:#353535;"></div>
<div style="left:985.5px;top:614.5px;width:14.5px;height:15.5px;background:#353535;"></div>
<svg style="left:989.7px;top:543.0px" width="6" height="3" viewBox="0 0 6 3"><path d="M0 3 L3 0 L6 3 Z" fill="#8a8a8a"/></svg>
<svg style="left:989.7px;top:621.0px" width="6" height="3" viewBox="0 0 6 3"><path d="M0 0 L3 3 L6 0 Z" fill="#8a8a8a"/></svg>
<div style="left:990px;top:590.5px;width:6.5px;height:23.5px;background:linear-gradient(90deg,#0a3a5c,#0a6a84 30%,#0a6a84 70%,#0a3a5c);"></div>
<div style="left:18px;top:647px;width:94.5px;height:30px;background:#2e2e2e;border:1px solid #9a9a9a;box-sizing:border-box;"></div>
<div style="left:53.4px;top:654.24px;font-size:14.6px;line-height:1;color:#575757;white-space:pre;transform-origin:0 0;transform:scaleX(0.8584);">Add</div>
<div style="left:119px;top:647px;width:94.5px;height:30px;background:#277dc0;box-sizing:border-box;border:1px solid #8a8a8a;box-shadow:inset 0 0 0 1.5px #0b0b5e,inset 0 0 0 2.5px #2b93d8;"></div>
<div style="left:143.8px;top:654.24px;font-size:14.6px;line-height:1;color:#fff;white-space:pre;transform-origin:0 0;transform:scaleX(0.8057);">Remove</div>
<div style="left:715px;top:688px;width:71px;height:32px;background:#277dc0;box-sizing:border-box;border:1px solid #6a6a6a;box-shadow:inset 0 0 0 1.5px #0b0b5e,inset 0 0 0 2.5px #2b93d8;"></div>
<div style="left:730.6px;top:697.34px;font-size:14.6px;line-height:1;color:#fff;white-space:pre;transform-origin:0 0;transform:scaleX(0.8718);">Wizard</div>
<div style="left:792px;top:688px;width:70.5px;height:32px;background:#277dc0;box-sizing:border-box;border:1px solid #6a6a6a;box-shadow:inset 0 0 0 1.5px #0b0b5e,inset 0 0 0 2.5px #2b93d8;"></div>
<div style="left:813.6px;top:697.34px;font-size:14.6px;line-height:1;color:#fff;white-space:pre;transform-origin:0 0;transform:scaleX(0.8053);">Save</div>
<div style="left:868.4px;top:688px;width:70.60000000000002px;height:32px;background:#277dc0;box-sizing:border-box;border:1px solid #6a6a6a;box-shadow:inset 0 0 0 1.5px #0b0b5e,inset 0 0 0 2.5px #2b93d8;"></div>
<div style="left:884.4px;top:697.34px;font-size:14.6px;line-height:1;color:#fff;white-space:pre;transform-origin:0 0;transform:scaleX(0.8339);">Cancel</div>
<div style="left:944.5px;top:688px;width:71.5px;height:32px;background:#277dc0;box-sizing:border-box;border:1px solid #6a6a6a;box-shadow:inset 0 0 0 1.5px #0b0b5e,inset 0 0 0 2.5px #2b93d8;"></div>
<div style="left:963.6px;top:697.34px;font-size:14.6px;line-height:1;color:#fff;white-space:pre;transform-origin:0 0;transform:scaleX(0.8492);">Close</div>
<div style="left:176px;top:349px;width:151.5px;height:117px;background:#f0f0f0;box-sizing:border-box;border:1px solid #a0a0a0;box-shadow:2px 2px 3px rgba(0,0,0,0.45);"></div>
<div style="left:204px;top:352px;width:1px;height:111px;background:#d7d7d7;"></div>
<div style="left:205px;top:352px;width:1px;height:111px;background:#fdfdfd;"></div>
<div style="left:205px;top:417.5px;width:120px;height:1px;background:#d7d7d7;"></div>
<div style="left:205px;top:418.5px;width:120px;height:1px;background:#fdfdfd;"></div>
<div style="left:178.5px;top:421.5px;width:146.5px;height:20px;background:#d1e2f2;box-sizing:border-box;border:1px solid #78aee5;"></div>
<div style="left:208.6px;top:356.78px;font-size:11.6px;line-height:1;color:#111;white-space:pre;transform-origin:0 0;transform:scaleX(0.9618);">Image Type:3</div>
<div style="left:208.6px;top:377.38px;font-size:11.6px;line-height:1;color:#111;white-space:pre;transform-origin:0 0;transform:scaleX(0.9618);">Image Type:4</div>
<div style="left:208.6px;top:397.88px;font-size:11.6px;line-height:1;color:#111;white-space:pre;transform-origin:0 0;transform:scaleX(0.9518);"># of Frames</div>
<div style="left:208.6px;top:425.78px;font-size:11.6px;line-height:1;color:#111;white-space:pre;transform-origin:0 0;transform:scaleX(0.9202);">Clear L%</div>
<div style="left:208.6px;top:446.18px;font-size:11.6px;line-height:1;color:#111;white-space:pre;transform-origin:0 0;transform:scaleX(0.9585);">Clear All</div>
<svg style="left:312.35px;top:359.09999999999997px" width="3.3" height="6.6" viewBox="0 0 3.3 6.6"><path d="M0 0 L3.3 3.3 L0 6.6 Z" fill="#111"/></svg>
<svg style="left:312.35px;top:379.7px" width="3.3" height="6.6" viewBox="0 0 3.3 6.6"><path d="M0 0 L3.3 3.3 L0 6.6 Z" fill="#111"/></svg>
<svg style="left:312.35px;top:400.2px" width="3.3" height="6.6" viewBox="0 0 3.3 6.6"><path d="M0 0 L3.3 3.3 L0 6.6 Z" fill="#111"/></svg>
</body></html>
